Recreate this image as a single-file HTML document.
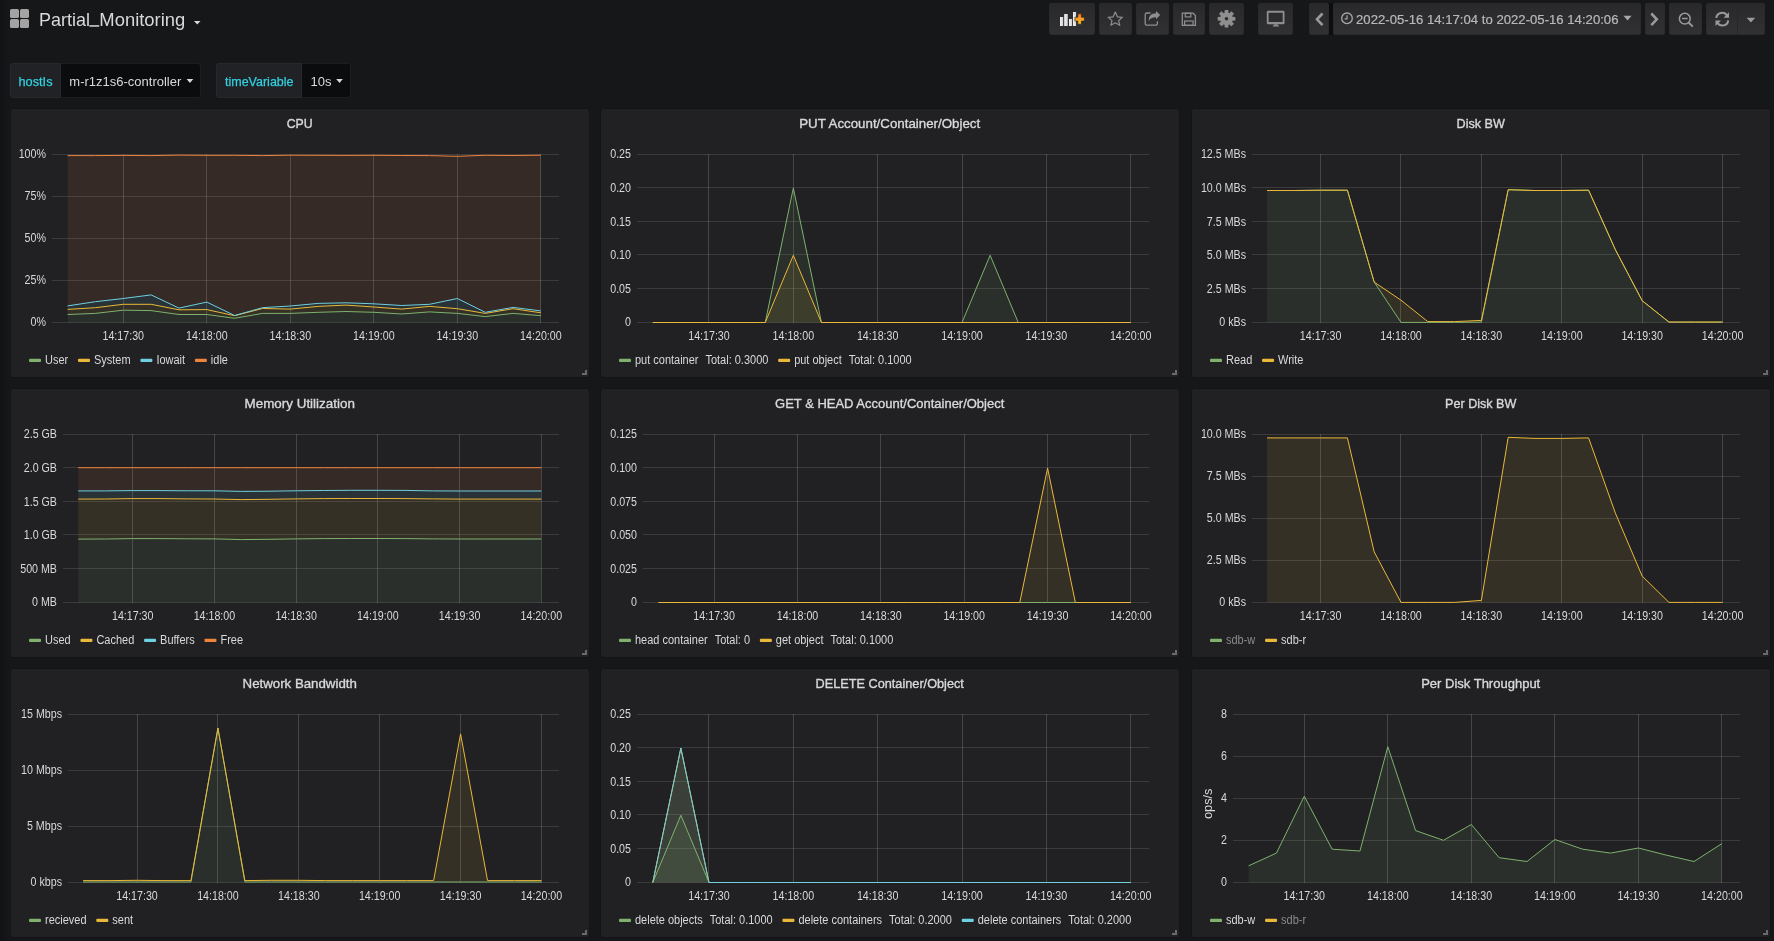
<!DOCTYPE html>
<html><head><meta charset="utf-8">
<style>
html,body{margin:0;padding:0;width:1774px;height:941px;overflow:hidden;background:#161719;}
body{position:relative;font-family:"Liberation Sans",sans-serif;color:#d8d9da;}
.shade{position:absolute;left:0;top:0;width:10px;height:941px;background:linear-gradient(to right,#111214,#161719);}
.panel{position:absolute;width:580px;height:270px;box-sizing:border-box;border:1px solid #131416;background:#212124;border-radius:3px;overflow:hidden;}
.panel svg{position:absolute;left:0;top:0;font-family:"Liberation Sans",sans-serif;}
.btn{position:absolute;top:3px;height:32px;box-sizing:border-box;border:1px solid #2a2a2d;border-radius:2px;background:linear-gradient(to bottom,#29292c,#313134);}
svg.full{position:absolute;left:0;top:0;font-family:"Liberation Sans",sans-serif;}
svg{will-change:transform;}
.vl{position:absolute;top:63px;height:35px;box-sizing:border-box;background:#212226;border:1px solid #27282b;border-radius:3px 0 0 3px;}
.vv{position:absolute;top:63px;height:35px;box-sizing:border-box;background:#0b0c0e;border:1px solid #1c1d20;border-left:none;border-radius:0 3px 3px 0;}
</style></head><body>
<div class="shade"></div>
<!-- buttons -->
<div class="btn" style="left:1049px;width:46px"></div>
<div class="btn" style="left:1099px;width:33px"></div>
<div class="btn" style="left:1136px;width:33px"></div>
<div class="btn" style="left:1173px;width:32px"></div>
<div class="btn" style="left:1209px;width:35px"></div>
<div class="btn" style="left:1258px;width:35px"></div>
<div style="position:absolute;left:1329px;top:3px;width:4px;height:32px;background:#0c0d0f"></div>
<div class="btn" style="left:1309px;width:20px"></div>
<div class="btn" style="left:1333px;width:308px"></div>
<div class="btn" style="left:1645px;width:20px"></div>
<div class="btn" style="left:1669px;width:33px"></div>
<div class="btn" style="left:1706px;width:59px"></div>
<div style="position:absolute;left:1737px;top:4px;width:1px;height:30px;background:#27272a"></div>
<!-- variables -->
<div class="vl" style="left:10px;width:51px"></div>
<div class="vv" style="left:61px;width:140px"></div>
<div class="vl" style="left:216px;width:86px"></div>
<div class="vv" style="left:302px;width:49px"></div>
<svg class="full" width="1774" height="100" viewBox="0 0 1774 100">
 <!-- dashboard grid icon -->
 <g fill="#a3a3a3">
  <rect x="10" y="9" width="9" height="9" rx="1.6"/>
  <rect x="20" y="9" width="9" height="9" rx="1.6"/>
  <rect x="10" y="19" width="9" height="9" rx="1.6"/>
  <rect x="20" y="19" width="9" height="9" rx="1.6"/>
 </g>
 <text x="38.9" y="26.3" font-size="19" fill="#d8d9da" textLength="51" lengthAdjust="spacingAndGlyphs">Partial</text><rect x="89.4" y="25.2" width="9.8" height="1.5" fill="#d8d9da"/><text x="99.3" y="26.3" font-size="19" fill="#d8d9da" textLength="86" lengthAdjust="spacingAndGlyphs">Monitoring</text>
 <path d="M194,21 L200.5,21 L197.25,24.5 Z" fill="#d8d9da"/>
 <!-- add panel icon -->
 <defs>
  <linearGradient id="bar" x1="0" y1="0" x2="1" y2="0"><stop offset="0" stop-color="#f4f4f4"/><stop offset="1" stop-color="#cfcfcf"/></linearGradient>
  <linearGradient id="plus" x1="0" y1="0" x2="0" y2="1"><stop offset="0" stop-color="#f37a2a"/><stop offset="1" stop-color="#fbc21a"/></linearGradient>
 </defs>
 <g fill="url(#bar)">
  <rect x="1060" y="17" width="3.2" height="9"/>
  <rect x="1064.2" y="14" width="3.6" height="12"/>
  <rect x="1069" y="19" width="3.1" height="7"/>
  <rect x="1073" y="12" width="3.1" height="14"/>
 </g>
 <path d="M1077.8,13.8 h3.6 v3.4 h3 v3.9 h-3 v3.1 h-3.6 v-3.1 h-2.9 v-3.9 h2.9 z" fill="url(#plus)" stroke="#212124" stroke-width="0.6"/>
 <!-- star -->
 <path d="M1115.3,12 L1117.4,16.8 L1122.4,17.3 L1118.6,20.6 L1119.8,25.3 L1115.3,22.8 L1110.8,25.3 L1112,20.6 L1108.2,17.3 L1113.2,16.8 Z" fill="none" stroke="#8e8e8e" stroke-width="1.2" stroke-linejoin="round"/>
 <!-- share -->
 <path d="M1150.5,13 h-3.5 a1.8,1.8 0 0 0 -1.8,1.8 v8.6 a1.8,1.8 0 0 0 1.8,1.8 h8.6 a1.8,1.8 0 0 0 1.8,-1.8 v-2.2" fill="none" stroke="#8e8e8e" stroke-width="1.3"/>
 <path d="M1160.2,15 L1156,11 L1156,13.2 C1151,13.2 1148.6,16 1148.8,21.2 C1150,18.3 1152.5,17.2 1156,17.3 L1156,19.3 Z" fill="#8e8e8e"/>
 <!-- save -->
 <path d="M1182.3,13.2 h10.8 l2.3,2.3 v9.8 h-13.1 z" fill="none" stroke="#8e8e8e" stroke-width="1.3"/>
 <rect x="1185.3" y="13.3" width="5.5" height="3.6" fill="none" stroke="#8e8e8e" stroke-width="1.2"/>
 <rect x="1184.6" y="21" width="8.5" height="4.3" fill="none" stroke="#8e8e8e" stroke-width="1.2"/>
 <!-- cog -->
 <path d="M1224.55,12.81 L1224.71,9.98 L1228.29,9.98 L1228.45,12.81 L1229.36,13.19 L1231.47,11.30 L1234.00,13.83 L1232.11,15.94 L1232.49,16.85 L1235.32,17.01 L1235.32,20.59 L1232.49,20.75 L1232.11,21.66 L1234.00,23.77 L1231.47,26.30 L1229.36,24.41 L1228.45,24.79 L1228.29,27.62 L1224.71,27.62 L1224.55,24.79 L1223.64,24.41 L1221.53,26.30 L1219.00,23.77 L1220.89,21.66 L1220.51,20.75 L1217.68,20.59 L1217.68,17.01 L1220.51,16.85 L1220.89,15.94 L1219.00,13.83 L1221.53,11.30 L1223.64,13.19 Z M1228.30,18.8 A1.8,1.8 0 1 0 1224.70,18.8 A1.8,1.8 0 1 0 1228.30,18.8 Z" fill="#8e8e8e" fill-rule="evenodd"/>
 <!-- monitor -->
 <path d="M1268.1,10.8 h15.1 a1.3,1.3 0 0 1 1.3,1.3 v10.8 a1.3,1.3 0 0 1 -1.3,1.3 h-15.1 a1.3,1.3 0 0 1 -1.3,-1.3 v-10.8 a1.3,1.3 0 0 1 1.3,-1.3 z M1268.6,12.7 v9.2 h14.1 v-9.2 z" fill="#8e8e8e" fill-rule="evenodd"/>
 <path d="M1274,24.2 h3.5 l0.6,1.3 h0.9 v0.9 h-6.2 v-0.9 h0.9 z" fill="#8e8e8e"/>
 <!-- chevron left -->
 <path d="M1322.5,13.5 L1317,19.3 L1322.5,25.2" fill="none" stroke="#9a9a9a" stroke-width="2.6"/>
 <!-- clock -->
 <circle cx="1347" cy="18.3" r="5.3" fill="none" stroke="#a8a8a8" stroke-width="1.3"/>
 <path d="M1347,15.3 v3.5 h-2.4" fill="none" stroke="#a8a8a8" stroke-width="1.2"/>
 <text x="1356" y="23.8" font-size="12.5" fill="#b8b8b8" stroke="#b8b8b8" stroke-width="0.2" textLength="262.5" lengthAdjust="spacingAndGlyphs">2022-05-16 14:17:04 to 2022-05-16 14:20:06</text>
 <path d="M1623.5,15.8 L1631.6,15.8 L1627.55,20.6 Z" fill="#a8a8a8"/>
 <!-- chevron right -->
 <path d="M1651.3,13.5 L1656.8,19.3 L1651.3,25.2" fill="none" stroke="#9a9a9a" stroke-width="2.6"/>
 <!-- zoom out -->
 <circle cx="1684.8" cy="18.7" r="5.4" fill="none" stroke="#9a9a9a" stroke-width="1.5"/>
 <path d="M1682,18.5 h5.6" stroke="#9a9a9a" stroke-width="1.5"/>
 <path d="M1688.6,22.5 L1692.8,26.7" stroke="#9a9a9a" stroke-width="1.9"/>
 <!-- refresh -->
 <g fill="none" stroke="#9a9a9a" stroke-width="2">
  <path d="M1716.3,18 A5.8,5.8 0 0 1 1727,15.5"/>
  <path d="M1728.2,20.3 A5.8,5.8 0 0 1 1717.5,22.8"/>
 </g>
 <path d="M1729,12.3 v5.4 h-5.4 z" fill="#9a9a9a"/>
 <path d="M1715.5,26 v-5.4 h5.4 z" fill="#9a9a9a"/>
 <path d="M1746.6,17.8 L1755.2,17.8 L1750.9,22.4 Z" fill="#9a9a9a"/>
 <!-- variables text -->
 <text x="18.5" y="85.7" font-size="13" fill="#32d1df" stroke="#32d1df" stroke-width="0.25" textLength="34" lengthAdjust="spacingAndGlyphs">hostIs</text><text x="69.3" y="85.7" font-size="13" fill="#d8d9da" textLength="112" lengthAdjust="spacingAndGlyphs">m-r1z1s6-controller</text><text x="225" y="85.7" font-size="13" fill="#32d1df" stroke="#32d1df" stroke-width="0.25" textLength="68.5" lengthAdjust="spacingAndGlyphs">timeVariable</text><text x="310.5" y="85.7" font-size="13" fill="#d8d9da" textLength="21" lengthAdjust="spacingAndGlyphs">10s</text>
 <path d="M186.6,79 L193.3,79 L189.95,82.9 Z" fill="#d8d9da"/>
 <path d="M336.2,79 L342.8,79 L339.5,82.9 Z" fill="#d8d9da"/>
</svg>
<div class="panel" style="left:10px;top:108px"><svg width="578" height="268" viewBox="0 0 578 268">
<text x="288.7" y="19.1" font-size="13" fill="#d8d9da" stroke="#d8d9da" stroke-width="0.35" text-anchor="middle" textLength="26.0" lengthAdjust="spacingAndGlyphs">CPU</text>
<line x1="41" y1="45.5" x2="548" y2="45.5" stroke="#c8c8c8" stroke-opacity="0.16" stroke-width="1"/>
<text x="35.00" y="49.40" font-size="12" fill="#d8d9da" text-anchor="end" textLength="27.32" lengthAdjust="spacingAndGlyphs">100%</text>
<line x1="41" y1="87.5" x2="548" y2="87.5" stroke="#c8c8c8" stroke-opacity="0.16" stroke-width="1"/>
<text x="35.00" y="91.40" font-size="12" fill="#d8d9da" text-anchor="end" textLength="21.38" lengthAdjust="spacingAndGlyphs">75%</text>
<line x1="41" y1="129.5" x2="548" y2="129.5" stroke="#c8c8c8" stroke-opacity="0.16" stroke-width="1"/>
<text x="35.00" y="133.40" font-size="12" fill="#d8d9da" text-anchor="end" textLength="21.38" lengthAdjust="spacingAndGlyphs">50%</text>
<line x1="41" y1="171.5" x2="548" y2="171.5" stroke="#c8c8c8" stroke-opacity="0.16" stroke-width="1"/>
<text x="35.00" y="175.40" font-size="12" fill="#d8d9da" text-anchor="end" textLength="21.38" lengthAdjust="spacingAndGlyphs">25%</text>
<line x1="41" y1="213.5" x2="548" y2="213.5" stroke="#c8c8c8" stroke-opacity="0.16" stroke-width="1"/>
<text x="35.00" y="217.40" font-size="12" fill="#d8d9da" text-anchor="end" textLength="15.44" lengthAdjust="spacingAndGlyphs">0%</text>
<line x1="112.5" y1="45.0" x2="112.5" y2="214.0" stroke="#c8c8c8" stroke-opacity="0.22" stroke-width="1"/>
<text x="112.28" y="230.50" font-size="12" fill="#d8d9da" text-anchor="middle" textLength="41.57" lengthAdjust="spacingAndGlyphs">14:17:30</text>
<line x1="195.5" y1="45.0" x2="195.5" y2="214.0" stroke="#c8c8c8" stroke-opacity="0.22" stroke-width="1"/>
<text x="195.80" y="230.50" font-size="12" fill="#d8d9da" text-anchor="middle" textLength="41.57" lengthAdjust="spacingAndGlyphs">14:18:00</text>
<line x1="279.5" y1="45.0" x2="279.5" y2="214.0" stroke="#c8c8c8" stroke-opacity="0.22" stroke-width="1"/>
<text x="279.33" y="230.50" font-size="12" fill="#d8d9da" text-anchor="middle" textLength="41.57" lengthAdjust="spacingAndGlyphs">14:18:30</text>
<line x1="362.5" y1="45.0" x2="362.5" y2="214.0" stroke="#c8c8c8" stroke-opacity="0.22" stroke-width="1"/>
<text x="362.85" y="230.50" font-size="12" fill="#d8d9da" text-anchor="middle" textLength="41.57" lengthAdjust="spacingAndGlyphs">14:19:00</text>
<line x1="446.5" y1="45.0" x2="446.5" y2="214.0" stroke="#c8c8c8" stroke-opacity="0.22" stroke-width="1"/>
<text x="446.38" y="230.50" font-size="12" fill="#d8d9da" text-anchor="middle" textLength="41.57" lengthAdjust="spacingAndGlyphs">14:19:30</text>
<line x1="529.5" y1="45.0" x2="529.5" y2="214.0" stroke="#c8c8c8" stroke-opacity="0.22" stroke-width="1"/>
<text x="529.90" y="230.50" font-size="12" fill="#d8d9da" text-anchor="middle" textLength="41.57" lengthAdjust="spacingAndGlyphs">14:20:00</text>
<polygon points="56.59,205.50 84.43,204.40 112.28,201.20 140.12,201.60 167.96,205.50 195.80,205.50 223.64,209.30 251.48,204.40 279.33,204.40 307.17,203.30 335.01,202.50 362.85,203.30 390.69,205.00 418.54,202.90 446.38,204.40 474.22,207.60 502.06,204.40 529.90,206.70 529.90,213.50 502.06,213.50 474.22,213.50 446.38,213.50 418.54,213.50 390.69,213.50 362.85,213.50 335.01,213.50 307.17,213.50 279.33,213.50 251.48,213.50 223.64,213.50 195.80,213.50 167.96,213.50 140.12,213.50 112.28,213.50 84.43,213.50 56.59,213.50" fill="#7EB26D" fill-opacity="0.1"/>
<polygon points="56.59,200.40 84.43,198.70 112.28,195.30 140.12,195.30 167.96,200.80 195.80,200.60 223.64,206.70 251.48,199.50 279.33,200.10 307.17,197.40 335.01,196.10 362.85,198.00 390.69,200.10 418.54,197.40 446.38,199.70 474.22,204.40 502.06,199.70 529.90,203.80 529.90,206.70 502.06,204.40 474.22,207.60 446.38,204.40 418.54,202.90 390.69,205.00 362.85,203.30 335.01,202.50 307.17,203.30 279.33,204.40 251.48,204.40 223.64,209.30 195.80,205.50 167.96,205.50 140.12,201.60 112.28,201.20 84.43,204.40 56.59,205.50" fill="#EAB839" fill-opacity="0.1"/>
<polygon points="56.59,196.90 84.43,192.70 112.28,189.50 140.12,185.90 167.96,199.10 195.80,193.10 223.64,206.50 251.48,198.70 279.33,197.00 307.17,194.40 335.01,193.80 362.85,194.80 390.69,196.50 418.54,195.30 446.38,189.50 474.22,203.30 502.06,198.40 529.90,201.90 529.90,203.80 502.06,199.70 474.22,204.40 446.38,199.70 418.54,197.40 390.69,200.10 362.85,198.00 335.01,196.10 307.17,197.40 279.33,200.10 251.48,199.50 223.64,206.70 195.80,200.60 167.96,200.80 140.12,195.30 112.28,195.30 84.43,198.70 56.59,200.40" fill="#6ED0E0" fill-opacity="0.1"/>
<polygon points="56.59,46.60 84.43,46.60 112.28,46.40 140.12,46.60 167.96,46.10 195.80,46.30 223.64,46.30 251.48,46.60 279.33,46.20 307.17,46.30 335.01,46.40 362.85,46.30 390.69,46.50 418.54,46.60 446.38,47.30 474.22,46.30 502.06,46.50 529.90,46.20 529.90,201.90 502.06,198.40 474.22,203.30 446.38,189.50 418.54,195.30 390.69,196.50 362.85,194.80 335.01,193.80 307.17,194.40 279.33,197.00 251.48,198.70 223.64,206.50 195.80,193.10 167.96,199.10 140.12,185.90 112.28,189.50 84.43,192.70 56.59,196.90" fill="#EF843C" fill-opacity="0.1"/>
<polyline points="56.59,205.50 84.43,204.40 112.28,201.20 140.12,201.60 167.96,205.50 195.80,205.50 223.64,209.30 251.48,204.40 279.33,204.40 307.17,203.30 335.01,202.50 362.85,203.30 390.69,205.00 418.54,202.90 446.38,204.40 474.22,207.60 502.06,204.40 529.90,206.70" fill="none" stroke="#7EB26D" stroke-width="1" stroke-linejoin="round"/>
<polyline points="56.59,200.40 84.43,198.70 112.28,195.30 140.12,195.30 167.96,200.80 195.80,200.60 223.64,206.70 251.48,199.50 279.33,200.10 307.17,197.40 335.01,196.10 362.85,198.00 390.69,200.10 418.54,197.40 446.38,199.70 474.22,204.40 502.06,199.70 529.90,203.80" fill="none" stroke="#EAB839" stroke-width="1" stroke-linejoin="round"/>
<polyline points="56.59,196.90 84.43,192.70 112.28,189.50 140.12,185.90 167.96,199.10 195.80,193.10 223.64,206.50 251.48,198.70 279.33,197.00 307.17,194.40 335.01,193.80 362.85,194.80 390.69,196.50 418.54,195.30 446.38,189.50 474.22,203.30 502.06,198.40 529.90,201.90" fill="none" stroke="#6ED0E0" stroke-width="1" stroke-linejoin="round"/>
<polyline points="56.59,46.60 84.43,46.60 112.28,46.40 140.12,46.60 167.96,46.10 195.80,46.30 223.64,46.30 251.48,46.60 279.33,46.20 307.17,46.30 335.01,46.40 362.85,46.30 390.69,46.50 418.54,46.60 446.38,47.30 474.22,46.30 502.06,46.50 529.90,46.20" fill="none" stroke="#EF843C" stroke-width="1" stroke-linejoin="round"/>
<rect x="18" y="249.8" width="12" height="3.2" rx="1" fill="#7EB26D"/>
<text x="34.00" y="255.30" font-size="12" fill="#d8d9da" text-anchor="start" textLength="23.18" lengthAdjust="spacingAndGlyphs">User</text>
<rect x="66.983240625" y="249.8" width="12" height="3.2" rx="1" fill="#EAB839"/>
<text x="82.98" y="255.30" font-size="12" fill="#d8d9da" text-anchor="start" textLength="36.61" lengthAdjust="spacingAndGlyphs">System</text>
<rect x="129.391246875" y="249.8" width="12" height="3.2" rx="1" fill="#6ED0E0"/>
<text x="145.39" y="255.30" font-size="12" fill="#d8d9da" text-anchor="start" textLength="28.68" lengthAdjust="spacingAndGlyphs">Iowait</text>
<rect x="183.87478125" y="249.8" width="12" height="3.2" rx="1" fill="#EF843C"/>
<text x="199.87" y="255.30" font-size="12" fill="#d8d9da" text-anchor="start" textLength="17.09" lengthAdjust="spacingAndGlyphs">idle</text>
<path d="M574,261 h2 v5 h-5 v-2 h3 z" fill="#6a6a6c"/>
</svg></div>
<div class="panel" style="left:600px;top:108px"><svg width="578" height="268" viewBox="0 0 578 268">
<text x="288.7" y="19.1" font-size="13" fill="#d8d9da" stroke="#d8d9da" stroke-width="0.35" text-anchor="middle" textLength="181.0" lengthAdjust="spacingAndGlyphs">PUT Account/Container/Object</text>
<line x1="36" y1="45.5" x2="548" y2="45.5" stroke="#c8c8c8" stroke-opacity="0.16" stroke-width="1"/>
<text x="30.00" y="49.40" font-size="12" fill="#d8d9da" text-anchor="end" textLength="20.79" lengthAdjust="spacingAndGlyphs">0.25</text>
<line x1="36" y1="78.5" x2="548" y2="78.5" stroke="#c8c8c8" stroke-opacity="0.16" stroke-width="1"/>
<text x="30.00" y="83.00" font-size="12" fill="#d8d9da" text-anchor="end" textLength="20.79" lengthAdjust="spacingAndGlyphs">0.20</text>
<line x1="36" y1="112.5" x2="548" y2="112.5" stroke="#c8c8c8" stroke-opacity="0.16" stroke-width="1"/>
<text x="30.00" y="116.60" font-size="12" fill="#d8d9da" text-anchor="end" textLength="20.79" lengthAdjust="spacingAndGlyphs">0.15</text>
<line x1="36" y1="145.5" x2="548" y2="145.5" stroke="#c8c8c8" stroke-opacity="0.16" stroke-width="1"/>
<text x="30.00" y="150.20" font-size="12" fill="#d8d9da" text-anchor="end" textLength="20.79" lengthAdjust="spacingAndGlyphs">0.10</text>
<line x1="36" y1="179.5" x2="548" y2="179.5" stroke="#c8c8c8" stroke-opacity="0.16" stroke-width="1"/>
<text x="30.00" y="183.80" font-size="12" fill="#d8d9da" text-anchor="end" textLength="20.79" lengthAdjust="spacingAndGlyphs">0.05</text>
<line x1="36" y1="213.5" x2="548" y2="213.5" stroke="#c8c8c8" stroke-opacity="0.16" stroke-width="1"/>
<text x="30.00" y="217.40" font-size="12" fill="#d8d9da" text-anchor="end" textLength="5.94" lengthAdjust="spacingAndGlyphs">0</text>
<line x1="107.5" y1="45.0" x2="107.5" y2="214.0" stroke="#c8c8c8" stroke-opacity="0.22" stroke-width="1"/>
<text x="107.98" y="230.50" font-size="12" fill="#d8d9da" text-anchor="middle" textLength="41.57" lengthAdjust="spacingAndGlyphs">14:17:30</text>
<line x1="192.5" y1="45.0" x2="192.5" y2="214.0" stroke="#c8c8c8" stroke-opacity="0.22" stroke-width="1"/>
<text x="192.33" y="230.50" font-size="12" fill="#d8d9da" text-anchor="middle" textLength="41.57" lengthAdjust="spacingAndGlyphs">14:18:00</text>
<line x1="276.5" y1="45.0" x2="276.5" y2="214.0" stroke="#c8c8c8" stroke-opacity="0.22" stroke-width="1"/>
<text x="276.68" y="230.50" font-size="12" fill="#d8d9da" text-anchor="middle" textLength="41.57" lengthAdjust="spacingAndGlyphs">14:18:30</text>
<line x1="361.5" y1="45.0" x2="361.5" y2="214.0" stroke="#c8c8c8" stroke-opacity="0.22" stroke-width="1"/>
<text x="361.03" y="230.50" font-size="12" fill="#d8d9da" text-anchor="middle" textLength="41.57" lengthAdjust="spacingAndGlyphs">14:19:00</text>
<line x1="445.5" y1="45.0" x2="445.5" y2="214.0" stroke="#c8c8c8" stroke-opacity="0.22" stroke-width="1"/>
<text x="445.38" y="230.50" font-size="12" fill="#d8d9da" text-anchor="middle" textLength="41.57" lengthAdjust="spacingAndGlyphs">14:19:30</text>
<line x1="529.5" y1="45.0" x2="529.5" y2="214.0" stroke="#c8c8c8" stroke-opacity="0.22" stroke-width="1"/>
<text x="529.72" y="230.50" font-size="12" fill="#d8d9da" text-anchor="middle" textLength="41.57" lengthAdjust="spacingAndGlyphs">14:20:00</text>
<polygon points="51.75,213.50 79.86,213.50 107.98,213.50 136.09,213.50 164.21,213.50 192.33,79.10 220.44,213.50 248.56,213.50 276.68,213.50 304.79,213.50 332.91,213.50 361.03,213.50 389.14,146.30 417.26,213.50 445.38,213.50 473.49,213.50 501.61,213.50 529.72,213.50 529.72,213.50 501.61,213.50 473.49,213.50 445.38,213.50 417.26,213.50 389.14,213.50 361.03,213.50 332.91,213.50 304.79,213.50 276.68,213.50 248.56,213.50 220.44,213.50 192.33,213.50 164.21,213.50 136.09,213.50 107.98,213.50 79.86,213.50 51.75,213.50" fill="#7EB26D" fill-opacity="0.1"/>
<polygon points="51.75,213.50 79.86,213.50 107.98,213.50 136.09,213.50 164.21,213.50 192.33,146.30 220.44,213.50 248.56,213.50 276.68,213.50 304.79,213.50 332.91,213.50 361.03,213.50 389.14,213.50 417.26,213.50 445.38,213.50 473.49,213.50 501.61,213.50 529.72,213.50 529.72,213.50 501.61,213.50 473.49,213.50 445.38,213.50 417.26,213.50 389.14,213.50 361.03,213.50 332.91,213.50 304.79,213.50 276.68,213.50 248.56,213.50 220.44,213.50 192.33,213.50 164.21,213.50 136.09,213.50 107.98,213.50 79.86,213.50 51.75,213.50" fill="#EAB839" fill-opacity="0.1"/>
<polyline points="51.75,213.50 79.86,213.50 107.98,213.50 136.09,213.50 164.21,213.50 192.33,79.10 220.44,213.50 248.56,213.50 276.68,213.50 304.79,213.50 332.91,213.50 361.03,213.50 389.14,146.30 417.26,213.50 445.38,213.50 473.49,213.50 501.61,213.50 529.72,213.50" fill="none" stroke="#7EB26D" stroke-width="1" stroke-linejoin="round"/>
<polyline points="51.75,213.50 79.86,213.50 107.98,213.50 136.09,213.50 164.21,213.50 192.33,146.30 220.44,213.50 248.56,213.50 276.68,213.50 304.79,213.50 332.91,213.50 361.03,213.50 389.14,213.50 417.26,213.50 445.38,213.50 473.49,213.50 501.61,213.50 529.72,213.50" fill="none" stroke="#EAB839" stroke-width="1" stroke-linejoin="round"/>
<rect x="18" y="249.8" width="12" height="3.2" rx="1" fill="#7EB26D"/>
<text x="34.00" y="255.30" font-size="12" fill="#d8d9da" text-anchor="start" textLength="63.48" lengthAdjust="spacingAndGlyphs">put container</text>
<text x="104.48" y="255.30" font-size="12" fill="#d8d9da" text-anchor="start" textLength="62.88" lengthAdjust="spacingAndGlyphs">Total: 0.3000</text>
<rect x="177.16350156250002" y="249.8" width="12" height="3.2" rx="1" fill="#EAB839"/>
<text x="193.16" y="255.30" font-size="12" fill="#d8d9da" text-anchor="start" textLength="47.61" lengthAdjust="spacingAndGlyphs">put object</text>
<text x="247.78" y="255.30" font-size="12" fill="#d8d9da" text-anchor="start" textLength="62.88" lengthAdjust="spacingAndGlyphs">Total: 0.1000</text>
<path d="M574,261 h2 v5 h-5 v-2 h3 z" fill="#6a6a6c"/>
</svg></div>
<div class="panel" style="left:1191px;top:108px"><svg width="578" height="268" viewBox="0 0 578 268">
<text x="288.7" y="19.1" font-size="13" fill="#d8d9da" stroke="#d8d9da" stroke-width="0.35" text-anchor="middle" textLength="48.3" lengthAdjust="spacingAndGlyphs">Disk BW</text>
<line x1="60" y1="45.5" x2="548" y2="45.5" stroke="#c8c8c8" stroke-opacity="0.16" stroke-width="1"/>
<text x="54.00" y="49.40" font-size="12" fill="#d8d9da" text-anchor="end" textLength="45.11" lengthAdjust="spacingAndGlyphs">12.5 MBs</text>
<line x1="60" y1="78.5" x2="548" y2="78.5" stroke="#c8c8c8" stroke-opacity="0.16" stroke-width="1"/>
<text x="54.00" y="83.00" font-size="12" fill="#d8d9da" text-anchor="end" textLength="45.11" lengthAdjust="spacingAndGlyphs">10.0 MBs</text>
<line x1="60" y1="112.5" x2="548" y2="112.5" stroke="#c8c8c8" stroke-opacity="0.16" stroke-width="1"/>
<text x="54.00" y="116.60" font-size="12" fill="#d8d9da" text-anchor="end" textLength="39.17" lengthAdjust="spacingAndGlyphs">7.5 MBs</text>
<line x1="60" y1="145.5" x2="548" y2="145.5" stroke="#c8c8c8" stroke-opacity="0.16" stroke-width="1"/>
<text x="54.00" y="150.20" font-size="12" fill="#d8d9da" text-anchor="end" textLength="39.17" lengthAdjust="spacingAndGlyphs">5.0 MBs</text>
<line x1="60" y1="179.5" x2="548" y2="179.5" stroke="#c8c8c8" stroke-opacity="0.16" stroke-width="1"/>
<text x="54.00" y="183.80" font-size="12" fill="#d8d9da" text-anchor="end" textLength="39.17" lengthAdjust="spacingAndGlyphs">2.5 MBs</text>
<line x1="60" y1="213.5" x2="548" y2="213.5" stroke="#c8c8c8" stroke-opacity="0.16" stroke-width="1"/>
<text x="54.00" y="217.40" font-size="12" fill="#d8d9da" text-anchor="end" textLength="26.71" lengthAdjust="spacingAndGlyphs">0 kBs</text>
<line x1="128.5" y1="45.0" x2="128.5" y2="214.0" stroke="#c8c8c8" stroke-opacity="0.22" stroke-width="1"/>
<text x="128.60" y="230.50" font-size="12" fill="#d8d9da" text-anchor="middle" textLength="41.57" lengthAdjust="spacingAndGlyphs">14:17:30</text>
<line x1="208.5" y1="45.0" x2="208.5" y2="214.0" stroke="#c8c8c8" stroke-opacity="0.22" stroke-width="1"/>
<text x="209.00" y="230.50" font-size="12" fill="#d8d9da" text-anchor="middle" textLength="41.57" lengthAdjust="spacingAndGlyphs">14:18:00</text>
<line x1="289.5" y1="45.0" x2="289.5" y2="214.0" stroke="#c8c8c8" stroke-opacity="0.22" stroke-width="1"/>
<text x="289.39" y="230.50" font-size="12" fill="#d8d9da" text-anchor="middle" textLength="41.57" lengthAdjust="spacingAndGlyphs">14:18:30</text>
<line x1="369.5" y1="45.0" x2="369.5" y2="214.0" stroke="#c8c8c8" stroke-opacity="0.22" stroke-width="1"/>
<text x="369.79" y="230.50" font-size="12" fill="#d8d9da" text-anchor="middle" textLength="41.57" lengthAdjust="spacingAndGlyphs">14:19:00</text>
<line x1="450.5" y1="45.0" x2="450.5" y2="214.0" stroke="#c8c8c8" stroke-opacity="0.22" stroke-width="1"/>
<text x="450.19" y="230.50" font-size="12" fill="#d8d9da" text-anchor="middle" textLength="41.57" lengthAdjust="spacingAndGlyphs">14:19:30</text>
<line x1="530.5" y1="45.0" x2="530.5" y2="214.0" stroke="#c8c8c8" stroke-opacity="0.22" stroke-width="1"/>
<text x="530.58" y="230.50" font-size="12" fill="#d8d9da" text-anchor="middle" textLength="41.57" lengthAdjust="spacingAndGlyphs">14:20:00</text>
<polygon points="75.01,81.50 101.81,81.50 128.60,81.20 155.40,81.20 182.20,173.10 209.00,213.40 235.80,213.40 262.60,213.40 289.39,213.20 316.19,80.70 342.99,81.50 369.79,81.50 396.59,81.20 423.39,140.70 450.19,191.70 476.98,213.20 503.78,213.20 530.58,213.20 530.58,213.50 503.78,213.50 476.98,213.50 450.19,213.50 423.39,213.50 396.59,213.50 369.79,213.50 342.99,213.50 316.19,213.50 289.39,213.50 262.60,213.50 235.80,213.50 209.00,213.50 182.20,213.50 155.40,213.50 128.60,213.50 101.81,213.50 75.01,213.50" fill="#7EB26D" fill-opacity="0.1"/>
<polygon points="75.01,81.50 101.81,81.50 128.60,81.20 155.40,81.20 182.20,173.10 209.00,191.20 235.80,212.60 262.60,212.60 289.39,211.40 316.19,80.70 342.99,81.50 369.79,81.50 396.59,81.20 423.39,140.70 450.19,191.70 476.98,213.00 503.78,213.00 530.58,213.00 530.58,213.20 503.78,213.20 476.98,213.20 450.19,191.70 423.39,140.70 396.59,81.20 369.79,81.50 342.99,81.50 316.19,80.70 289.39,213.20 262.60,213.40 235.80,213.40 209.00,213.40 182.20,173.10 155.40,81.20 128.60,81.20 101.81,81.50 75.01,81.50" fill="#EAB839" fill-opacity="0.1"/>
<polyline points="75.01,81.50 101.81,81.50 128.60,81.20 155.40,81.20 182.20,173.10 209.00,213.40 235.80,213.40 262.60,213.40 289.39,213.20 316.19,80.70 342.99,81.50 369.79,81.50 396.59,81.20 423.39,140.70 450.19,191.70 476.98,213.20 503.78,213.20 530.58,213.20" fill="none" stroke="#7EB26D" stroke-width="1" stroke-linejoin="round"/>
<polyline points="75.01,81.50 101.81,81.50 128.60,81.20 155.40,81.20 182.20,173.10 209.00,191.20 235.80,212.60 262.60,212.60 289.39,211.40 316.19,80.70 342.99,81.50 369.79,81.50 396.59,81.20 423.39,140.70 450.19,191.70 476.98,213.00 503.78,213.00 530.58,213.00" fill="none" stroke="#EAB839" stroke-width="1" stroke-linejoin="round"/>
<rect x="18" y="249.8" width="12" height="3.2" rx="1" fill="#7EB26D"/>
<text x="34.00" y="255.30" font-size="12" fill="#d8d9da" text-anchor="start" textLength="26.25" lengthAdjust="spacingAndGlyphs">Read</text>
<rect x="70.04992031249999" y="249.8" width="12" height="3.2" rx="1" fill="#EAB839"/>
<text x="86.05" y="255.30" font-size="12" fill="#d8d9da" text-anchor="start" textLength="25.42" lengthAdjust="spacingAndGlyphs">Write</text>
<path d="M574,261 h2 v5 h-5 v-2 h3 z" fill="#6a6a6c"/>
</svg></div>
<div class="panel" style="left:10px;top:388px"><svg width="578" height="268" viewBox="0 0 578 268">
<text x="288.7" y="19.1" font-size="13" fill="#d8d9da" stroke="#d8d9da" stroke-width="0.35" text-anchor="middle" textLength="110.3" lengthAdjust="spacingAndGlyphs">Memory Utilization</text>
<line x1="52" y1="45.5" x2="548" y2="45.5" stroke="#c8c8c8" stroke-opacity="0.16" stroke-width="1"/>
<text x="46.00" y="49.40" font-size="12" fill="#d8d9da" text-anchor="end" textLength="33.24" lengthAdjust="spacingAndGlyphs">2.5 GB</text>
<line x1="52" y1="78.5" x2="548" y2="78.5" stroke="#c8c8c8" stroke-opacity="0.16" stroke-width="1"/>
<text x="46.00" y="83.00" font-size="12" fill="#d8d9da" text-anchor="end" textLength="33.24" lengthAdjust="spacingAndGlyphs">2.0 GB</text>
<line x1="52" y1="112.5" x2="548" y2="112.5" stroke="#c8c8c8" stroke-opacity="0.16" stroke-width="1"/>
<text x="46.00" y="116.60" font-size="12" fill="#d8d9da" text-anchor="end" textLength="33.24" lengthAdjust="spacingAndGlyphs">1.5 GB</text>
<line x1="52" y1="145.5" x2="548" y2="145.5" stroke="#c8c8c8" stroke-opacity="0.16" stroke-width="1"/>
<text x="46.00" y="150.20" font-size="12" fill="#d8d9da" text-anchor="end" textLength="33.24" lengthAdjust="spacingAndGlyphs">1.0 GB</text>
<line x1="52" y1="179.5" x2="548" y2="179.5" stroke="#c8c8c8" stroke-opacity="0.16" stroke-width="1"/>
<text x="46.00" y="183.80" font-size="12" fill="#d8d9da" text-anchor="end" textLength="36.81" lengthAdjust="spacingAndGlyphs">500 MB</text>
<line x1="52" y1="213.5" x2="548" y2="213.5" stroke="#c8c8c8" stroke-opacity="0.16" stroke-width="1"/>
<text x="46.00" y="217.40" font-size="12" fill="#d8d9da" text-anchor="end" textLength="24.93" lengthAdjust="spacingAndGlyphs">0 MB</text>
<line x1="121.5" y1="45.0" x2="121.5" y2="214.0" stroke="#c8c8c8" stroke-opacity="0.22" stroke-width="1"/>
<text x="121.73" y="230.50" font-size="12" fill="#d8d9da" text-anchor="middle" textLength="41.57" lengthAdjust="spacingAndGlyphs">14:17:30</text>
<line x1="203.5" y1="45.0" x2="203.5" y2="214.0" stroke="#c8c8c8" stroke-opacity="0.22" stroke-width="1"/>
<text x="203.44" y="230.50" font-size="12" fill="#d8d9da" text-anchor="middle" textLength="41.57" lengthAdjust="spacingAndGlyphs">14:18:00</text>
<line x1="285.5" y1="45.0" x2="285.5" y2="214.0" stroke="#c8c8c8" stroke-opacity="0.22" stroke-width="1"/>
<text x="285.16" y="230.50" font-size="12" fill="#d8d9da" text-anchor="middle" textLength="41.57" lengthAdjust="spacingAndGlyphs">14:18:30</text>
<line x1="366.5" y1="45.0" x2="366.5" y2="214.0" stroke="#c8c8c8" stroke-opacity="0.22" stroke-width="1"/>
<text x="366.87" y="230.50" font-size="12" fill="#d8d9da" text-anchor="middle" textLength="41.57" lengthAdjust="spacingAndGlyphs">14:19:00</text>
<line x1="448.5" y1="45.0" x2="448.5" y2="214.0" stroke="#c8c8c8" stroke-opacity="0.22" stroke-width="1"/>
<text x="448.58" y="230.50" font-size="12" fill="#d8d9da" text-anchor="middle" textLength="41.57" lengthAdjust="spacingAndGlyphs">14:19:30</text>
<line x1="530.5" y1="45.0" x2="530.5" y2="214.0" stroke="#c8c8c8" stroke-opacity="0.22" stroke-width="1"/>
<text x="530.30" y="230.50" font-size="12" fill="#d8d9da" text-anchor="middle" textLength="41.57" lengthAdjust="spacingAndGlyphs">14:20:00</text>
<polygon points="67.25,150.10 94.49,150.00 121.73,149.60 148.97,149.60 176.20,149.80 203.44,149.90 230.68,150.60 257.92,150.30 285.16,149.90 312.39,149.60 339.63,149.50 366.87,149.50 394.11,149.60 421.34,149.90 448.58,150.00 475.82,150.00 503.06,150.00 530.30,150.00 530.30,213.50 503.06,213.50 475.82,213.50 448.58,213.50 421.34,213.50 394.11,213.50 366.87,213.50 339.63,213.50 312.39,213.50 285.16,213.50 257.92,213.50 230.68,213.50 203.44,213.50 176.20,213.50 148.97,213.50 121.73,213.50 94.49,213.50 67.25,213.50" fill="#7EB26D" fill-opacity="0.1"/>
<polygon points="67.25,110.10 94.49,110.00 121.73,109.60 148.97,109.60 176.20,109.90 203.44,110.00 230.68,110.60 257.92,110.30 285.16,109.90 312.39,109.60 339.63,109.50 366.87,109.50 394.11,109.60 421.34,109.90 448.58,110.10 475.82,110.10 503.06,110.10 530.30,110.10 530.30,150.00 503.06,150.00 475.82,150.00 448.58,150.00 421.34,149.90 394.11,149.60 366.87,149.50 339.63,149.50 312.39,149.60 285.16,149.90 257.92,150.30 230.68,150.60 203.44,149.90 176.20,149.80 148.97,149.60 121.73,149.60 94.49,150.00 67.25,150.10" fill="#EAB839" fill-opacity="0.1"/>
<polygon points="67.25,101.90 94.49,101.90 121.73,101.60 148.97,101.60 176.20,101.80 203.44,101.80 230.68,102.40 257.92,102.20 285.16,101.80 312.39,101.50 339.63,101.30 366.87,101.30 394.11,101.40 421.34,101.90 448.58,102.00 475.82,102.00 503.06,102.00 530.30,102.00 530.30,110.10 503.06,110.10 475.82,110.10 448.58,110.10 421.34,109.90 394.11,109.60 366.87,109.50 339.63,109.50 312.39,109.60 285.16,109.90 257.92,110.30 230.68,110.60 203.44,110.00 176.20,109.90 148.97,109.60 121.73,109.60 94.49,110.00 67.25,110.10" fill="#6ED0E0" fill-opacity="0.1"/>
<polygon points="67.25,78.70 94.49,78.70 121.73,78.70 148.97,78.70 176.20,78.70 203.44,78.70 230.68,78.70 257.92,78.70 285.16,78.70 312.39,78.70 339.63,78.70 366.87,78.70 394.11,78.70 421.34,78.70 448.58,78.70 475.82,78.70 503.06,78.70 530.30,78.70 530.30,102.00 503.06,102.00 475.82,102.00 448.58,102.00 421.34,101.90 394.11,101.40 366.87,101.30 339.63,101.30 312.39,101.50 285.16,101.80 257.92,102.20 230.68,102.40 203.44,101.80 176.20,101.80 148.97,101.60 121.73,101.60 94.49,101.90 67.25,101.90" fill="#EF843C" fill-opacity="0.1"/>
<polyline points="67.25,150.10 94.49,150.00 121.73,149.60 148.97,149.60 176.20,149.80 203.44,149.90 230.68,150.60 257.92,150.30 285.16,149.90 312.39,149.60 339.63,149.50 366.87,149.50 394.11,149.60 421.34,149.90 448.58,150.00 475.82,150.00 503.06,150.00 530.30,150.00" fill="none" stroke="#7EB26D" stroke-width="1" stroke-linejoin="round"/>
<polyline points="67.25,110.10 94.49,110.00 121.73,109.60 148.97,109.60 176.20,109.90 203.44,110.00 230.68,110.60 257.92,110.30 285.16,109.90 312.39,109.60 339.63,109.50 366.87,109.50 394.11,109.60 421.34,109.90 448.58,110.10 475.82,110.10 503.06,110.10 530.30,110.10" fill="none" stroke="#EAB839" stroke-width="1" stroke-linejoin="round"/>
<polyline points="67.25,101.90 94.49,101.90 121.73,101.60 148.97,101.60 176.20,101.80 203.44,101.80 230.68,102.40 257.92,102.20 285.16,101.80 312.39,101.50 339.63,101.30 366.87,101.30 394.11,101.40 421.34,101.90 448.58,102.00 475.82,102.00 503.06,102.00 530.30,102.00" fill="none" stroke="#6ED0E0" stroke-width="1" stroke-linejoin="round"/>
<polyline points="67.25,78.70 94.49,78.70 121.73,78.70 148.97,78.70 176.20,78.70 203.44,78.70 230.68,78.70 257.92,78.70 285.16,78.70 312.39,78.70 339.63,78.70 366.87,78.70 394.11,78.70 421.34,78.70 448.58,78.70 475.82,78.70 503.06,78.70 530.30,78.70" fill="none" stroke="#EF843C" stroke-width="1" stroke-linejoin="round"/>
<rect x="18" y="249.8" width="12" height="3.2" rx="1" fill="#7EB26D"/>
<text x="34.00" y="255.30" font-size="12" fill="#d8d9da" text-anchor="start" textLength="25.63" lengthAdjust="spacingAndGlyphs">Used</text>
<rect x="69.433153125" y="249.8" width="12" height="3.2" rx="1" fill="#EAB839"/>
<text x="85.43" y="255.30" font-size="12" fill="#d8d9da" text-anchor="start" textLength="37.85" lengthAdjust="spacingAndGlyphs">Cached</text>
<rect x="133.079840625" y="249.8" width="12" height="3.2" rx="1" fill="#6ED0E0"/>
<text x="149.08" y="255.30" font-size="12" fill="#d8d9da" text-anchor="start" textLength="34.59" lengthAdjust="spacingAndGlyphs">Buffers</text>
<rect x="193.466840625" y="249.8" width="12" height="3.2" rx="1" fill="#EF843C"/>
<text x="209.47" y="255.30" font-size="12" fill="#d8d9da" text-anchor="start" textLength="22.58" lengthAdjust="spacingAndGlyphs">Free</text>
<path d="M574,261 h2 v5 h-5 v-2 h3 z" fill="#6a6a6c"/>
</svg></div>
<div class="panel" style="left:600px;top:388px"><svg width="578" height="268" viewBox="0 0 578 268">
<text x="288.7" y="19.1" font-size="13" fill="#d8d9da" stroke="#d8d9da" stroke-width="0.35" text-anchor="middle" textLength="229.2" lengthAdjust="spacingAndGlyphs">GET &amp; HEAD Account/Container/Object</text>
<line x1="42" y1="45.5" x2="548" y2="45.5" stroke="#c8c8c8" stroke-opacity="0.16" stroke-width="1"/>
<text x="36.00" y="49.40" font-size="12" fill="#d8d9da" text-anchor="end" textLength="26.73" lengthAdjust="spacingAndGlyphs">0.125</text>
<line x1="42" y1="78.5" x2="548" y2="78.5" stroke="#c8c8c8" stroke-opacity="0.16" stroke-width="1"/>
<text x="36.00" y="83.00" font-size="12" fill="#d8d9da" text-anchor="end" textLength="26.73" lengthAdjust="spacingAndGlyphs">0.100</text>
<line x1="42" y1="112.5" x2="548" y2="112.5" stroke="#c8c8c8" stroke-opacity="0.16" stroke-width="1"/>
<text x="36.00" y="116.60" font-size="12" fill="#d8d9da" text-anchor="end" textLength="26.73" lengthAdjust="spacingAndGlyphs">0.075</text>
<line x1="42" y1="145.5" x2="548" y2="145.5" stroke="#c8c8c8" stroke-opacity="0.16" stroke-width="1"/>
<text x="36.00" y="150.20" font-size="12" fill="#d8d9da" text-anchor="end" textLength="26.73" lengthAdjust="spacingAndGlyphs">0.050</text>
<line x1="42" y1="179.5" x2="548" y2="179.5" stroke="#c8c8c8" stroke-opacity="0.16" stroke-width="1"/>
<text x="36.00" y="183.80" font-size="12" fill="#d8d9da" text-anchor="end" textLength="26.73" lengthAdjust="spacingAndGlyphs">0.025</text>
<line x1="42" y1="213.5" x2="548" y2="213.5" stroke="#c8c8c8" stroke-opacity="0.16" stroke-width="1"/>
<text x="36.00" y="217.40" font-size="12" fill="#d8d9da" text-anchor="end" textLength="5.94" lengthAdjust="spacingAndGlyphs">0</text>
<line x1="113.5" y1="45.0" x2="113.5" y2="214.0" stroke="#c8c8c8" stroke-opacity="0.22" stroke-width="1"/>
<text x="113.13" y="230.50" font-size="12" fill="#d8d9da" text-anchor="middle" textLength="41.57" lengthAdjust="spacingAndGlyphs">14:17:30</text>
<line x1="196.5" y1="45.0" x2="196.5" y2="214.0" stroke="#c8c8c8" stroke-opacity="0.22" stroke-width="1"/>
<text x="196.50" y="230.50" font-size="12" fill="#d8d9da" text-anchor="middle" textLength="41.57" lengthAdjust="spacingAndGlyphs">14:18:00</text>
<line x1="279.5" y1="45.0" x2="279.5" y2="214.0" stroke="#c8c8c8" stroke-opacity="0.22" stroke-width="1"/>
<text x="279.86" y="230.50" font-size="12" fill="#d8d9da" text-anchor="middle" textLength="41.57" lengthAdjust="spacingAndGlyphs">14:18:30</text>
<line x1="363.5" y1="45.0" x2="363.5" y2="214.0" stroke="#c8c8c8" stroke-opacity="0.22" stroke-width="1"/>
<text x="363.22" y="230.50" font-size="12" fill="#d8d9da" text-anchor="middle" textLength="41.57" lengthAdjust="spacingAndGlyphs">14:19:00</text>
<line x1="446.5" y1="45.0" x2="446.5" y2="214.0" stroke="#c8c8c8" stroke-opacity="0.22" stroke-width="1"/>
<text x="446.58" y="230.50" font-size="12" fill="#d8d9da" text-anchor="middle" textLength="41.57" lengthAdjust="spacingAndGlyphs">14:19:30</text>
<line x1="529.5" y1="45.0" x2="529.5" y2="214.0" stroke="#c8c8c8" stroke-opacity="0.22" stroke-width="1"/>
<text x="529.94" y="230.50" font-size="12" fill="#d8d9da" text-anchor="middle" textLength="41.57" lengthAdjust="spacingAndGlyphs">14:20:00</text>
<polygon points="57.56,213.50 85.35,213.50 113.13,213.50 140.92,213.50 168.71,213.50 196.50,213.50 224.28,213.50 252.07,213.50 279.86,213.50 307.64,213.50 335.43,213.50 363.22,213.50 391.00,213.50 418.79,213.50 446.58,213.50 474.36,213.50 502.15,213.50 529.94,213.50 529.94,213.50 502.15,213.50 474.36,213.50 446.58,213.50 418.79,213.50 391.00,213.50 363.22,213.50 335.43,213.50 307.64,213.50 279.86,213.50 252.07,213.50 224.28,213.50 196.50,213.50 168.71,213.50 140.92,213.50 113.13,213.50 85.35,213.50 57.56,213.50" fill="#7EB26D" fill-opacity="0.1"/>
<polygon points="57.56,213.50 85.35,213.50 113.13,213.50 140.92,213.50 168.71,213.50 196.50,213.50 224.28,213.50 252.07,213.50 279.86,213.50 307.64,213.50 335.43,213.50 363.22,213.50 391.00,213.50 418.79,213.50 446.58,79.10 474.36,213.50 502.15,213.50 529.94,213.50 529.94,213.50 502.15,213.50 474.36,213.50 446.58,213.50 418.79,213.50 391.00,213.50 363.22,213.50 335.43,213.50 307.64,213.50 279.86,213.50 252.07,213.50 224.28,213.50 196.50,213.50 168.71,213.50 140.92,213.50 113.13,213.50 85.35,213.50 57.56,213.50" fill="#EAB839" fill-opacity="0.1"/>
<polyline points="57.56,213.50 85.35,213.50 113.13,213.50 140.92,213.50 168.71,213.50 196.50,213.50 224.28,213.50 252.07,213.50 279.86,213.50 307.64,213.50 335.43,213.50 363.22,213.50 391.00,213.50 418.79,213.50 446.58,213.50 474.36,213.50 502.15,213.50 529.94,213.50" fill="none" stroke="#7EB26D" stroke-width="1" stroke-linejoin="round"/>
<polyline points="57.56,213.50 85.35,213.50 113.13,213.50 140.92,213.50 168.71,213.50 196.50,213.50 224.28,213.50 252.07,213.50 279.86,213.50 307.64,213.50 335.43,213.50 363.22,213.50 391.00,213.50 418.79,213.50 446.58,79.10 474.36,213.50 502.15,213.50 529.94,213.50" fill="none" stroke="#EAB839" stroke-width="1" stroke-linejoin="round"/>
<rect x="18" y="249.8" width="12" height="3.2" rx="1" fill="#7EB26D"/>
<text x="34.00" y="255.30" font-size="12" fill="#d8d9da" text-anchor="start" textLength="72.65" lengthAdjust="spacingAndGlyphs">head container</text>
<text x="113.65" y="255.30" font-size="12" fill="#d8d9da" text-anchor="start" textLength="35.40" lengthAdjust="spacingAndGlyphs">Total: 0</text>
<rect x="158.8492046875" y="249.8" width="12" height="3.2" rx="1" fill="#EAB839"/>
<text x="174.85" y="255.30" font-size="12" fill="#d8d9da" text-anchor="start" textLength="47.61" lengthAdjust="spacingAndGlyphs">get object</text>
<text x="229.46" y="255.30" font-size="12" fill="#d8d9da" text-anchor="start" textLength="62.88" lengthAdjust="spacingAndGlyphs">Total: 0.1000</text>
<path d="M574,261 h2 v5 h-5 v-2 h3 z" fill="#6a6a6c"/>
</svg></div>
<div class="panel" style="left:1191px;top:388px"><svg width="578" height="268" viewBox="0 0 578 268">
<text x="288.7" y="19.1" font-size="13" fill="#d8d9da" stroke="#d8d9da" stroke-width="0.35" text-anchor="middle" textLength="71.2" lengthAdjust="spacingAndGlyphs">Per Disk BW</text>
<line x1="60" y1="45.5" x2="548" y2="45.5" stroke="#c8c8c8" stroke-opacity="0.16" stroke-width="1"/>
<text x="54.00" y="49.40" font-size="12" fill="#d8d9da" text-anchor="end" textLength="45.11" lengthAdjust="spacingAndGlyphs">10.0 MBs</text>
<line x1="60" y1="87.5" x2="548" y2="87.5" stroke="#c8c8c8" stroke-opacity="0.16" stroke-width="1"/>
<text x="54.00" y="91.40" font-size="12" fill="#d8d9da" text-anchor="end" textLength="39.17" lengthAdjust="spacingAndGlyphs">7.5 MBs</text>
<line x1="60" y1="129.5" x2="548" y2="129.5" stroke="#c8c8c8" stroke-opacity="0.16" stroke-width="1"/>
<text x="54.00" y="133.40" font-size="12" fill="#d8d9da" text-anchor="end" textLength="39.17" lengthAdjust="spacingAndGlyphs">5.0 MBs</text>
<line x1="60" y1="171.5" x2="548" y2="171.5" stroke="#c8c8c8" stroke-opacity="0.16" stroke-width="1"/>
<text x="54.00" y="175.40" font-size="12" fill="#d8d9da" text-anchor="end" textLength="39.17" lengthAdjust="spacingAndGlyphs">2.5 MBs</text>
<line x1="60" y1="213.5" x2="548" y2="213.5" stroke="#c8c8c8" stroke-opacity="0.16" stroke-width="1"/>
<text x="54.00" y="217.40" font-size="12" fill="#d8d9da" text-anchor="end" textLength="26.71" lengthAdjust="spacingAndGlyphs">0 kBs</text>
<line x1="128.5" y1="45.0" x2="128.5" y2="214.0" stroke="#c8c8c8" stroke-opacity="0.22" stroke-width="1"/>
<text x="128.60" y="230.50" font-size="12" fill="#d8d9da" text-anchor="middle" textLength="41.57" lengthAdjust="spacingAndGlyphs">14:17:30</text>
<line x1="208.5" y1="45.0" x2="208.5" y2="214.0" stroke="#c8c8c8" stroke-opacity="0.22" stroke-width="1"/>
<text x="209.00" y="230.50" font-size="12" fill="#d8d9da" text-anchor="middle" textLength="41.57" lengthAdjust="spacingAndGlyphs">14:18:00</text>
<line x1="289.5" y1="45.0" x2="289.5" y2="214.0" stroke="#c8c8c8" stroke-opacity="0.22" stroke-width="1"/>
<text x="289.39" y="230.50" font-size="12" fill="#d8d9da" text-anchor="middle" textLength="41.57" lengthAdjust="spacingAndGlyphs">14:18:30</text>
<line x1="369.5" y1="45.0" x2="369.5" y2="214.0" stroke="#c8c8c8" stroke-opacity="0.22" stroke-width="1"/>
<text x="369.79" y="230.50" font-size="12" fill="#d8d9da" text-anchor="middle" textLength="41.57" lengthAdjust="spacingAndGlyphs">14:19:00</text>
<line x1="450.5" y1="45.0" x2="450.5" y2="214.0" stroke="#c8c8c8" stroke-opacity="0.22" stroke-width="1"/>
<text x="450.19" y="230.50" font-size="12" fill="#d8d9da" text-anchor="middle" textLength="41.57" lengthAdjust="spacingAndGlyphs">14:19:30</text>
<line x1="530.5" y1="45.0" x2="530.5" y2="214.0" stroke="#c8c8c8" stroke-opacity="0.22" stroke-width="1"/>
<text x="530.58" y="230.50" font-size="12" fill="#d8d9da" text-anchor="middle" textLength="41.57" lengthAdjust="spacingAndGlyphs">14:20:00</text>
<polygon points="75.01,48.90 101.81,48.90 128.60,48.90 155.40,48.90 182.20,162.90 209.00,213.40 235.80,213.40 262.60,213.40 289.39,211.40 316.19,48.30 342.99,49.40 369.79,49.40 396.59,48.90 423.39,124.10 450.19,187.10 476.98,213.40 503.78,213.40 530.58,213.40 530.58,213.50 503.78,213.50 476.98,213.50 450.19,213.50 423.39,213.50 396.59,213.50 369.79,213.50 342.99,213.50 316.19,213.50 289.39,213.50 262.60,213.50 235.80,213.50 209.00,213.50 182.20,213.50 155.40,213.50 128.60,213.50 101.81,213.50 75.01,213.50" fill="#EAB839" fill-opacity="0.1"/>
<polyline points="75.01,48.90 101.81,48.90 128.60,48.90 155.40,48.90 182.20,162.90 209.00,213.40 235.80,213.40 262.60,213.40 289.39,211.40 316.19,48.30 342.99,49.40 369.79,49.40 396.59,48.90 423.39,124.10 450.19,187.10 476.98,213.40 503.78,213.40 530.58,213.40" fill="none" stroke="#EAB839" stroke-width="1" stroke-linejoin="round"/>
<rect x="18" y="249.8" width="12" height="3.2" rx="1" fill="#7EB26D"/>
<text x="34.00" y="255.30" font-size="12" fill="#8a8a8c" text-anchor="start" textLength="29.29" lengthAdjust="spacingAndGlyphs">sdb-w</text>
<rect x="73.09000781249999" y="249.8" width="12" height="3.2" rx="1" fill="#EAB839"/>
<text x="89.09" y="255.30" font-size="12" fill="#d8d9da" text-anchor="start" textLength="25.02" lengthAdjust="spacingAndGlyphs">sdb-r</text>
<path d="M574,261 h2 v5 h-5 v-2 h3 z" fill="#6a6a6c"/>
</svg></div>
<div class="panel" style="left:10px;top:668px"><svg width="578" height="268" viewBox="0 0 578 268">
<text x="288.7" y="19.1" font-size="13" fill="#d8d9da" stroke="#d8d9da" stroke-width="0.35" text-anchor="middle" textLength="114.3" lengthAdjust="spacingAndGlyphs">Network Bandwidth</text>
<line x1="57" y1="45.5" x2="548" y2="45.5" stroke="#c8c8c8" stroke-opacity="0.16" stroke-width="1"/>
<text x="51.00" y="49.40" font-size="12" fill="#d8d9da" text-anchor="end" textLength="40.96" lengthAdjust="spacingAndGlyphs">15 Mbps</text>
<line x1="57" y1="101.5" x2="548" y2="101.5" stroke="#c8c8c8" stroke-opacity="0.16" stroke-width="1"/>
<text x="51.00" y="105.40" font-size="12" fill="#d8d9da" text-anchor="end" textLength="40.96" lengthAdjust="spacingAndGlyphs">10 Mbps</text>
<line x1="57" y1="157.5" x2="548" y2="157.5" stroke="#c8c8c8" stroke-opacity="0.16" stroke-width="1"/>
<text x="51.00" y="161.40" font-size="12" fill="#d8d9da" text-anchor="end" textLength="35.02" lengthAdjust="spacingAndGlyphs">5 Mbps</text>
<line x1="57" y1="213.5" x2="548" y2="213.5" stroke="#c8c8c8" stroke-opacity="0.16" stroke-width="1"/>
<text x="51.00" y="217.40" font-size="12" fill="#d8d9da" text-anchor="end" textLength="31.47" lengthAdjust="spacingAndGlyphs">0 kbps</text>
<line x1="126.5" y1="45.0" x2="126.5" y2="214.0" stroke="#c8c8c8" stroke-opacity="0.22" stroke-width="1"/>
<text x="126.03" y="230.50" font-size="12" fill="#d8d9da" text-anchor="middle" textLength="41.57" lengthAdjust="spacingAndGlyphs">14:17:30</text>
<line x1="206.5" y1="45.0" x2="206.5" y2="214.0" stroke="#c8c8c8" stroke-opacity="0.22" stroke-width="1"/>
<text x="206.92" y="230.50" font-size="12" fill="#d8d9da" text-anchor="middle" textLength="41.57" lengthAdjust="spacingAndGlyphs">14:18:00</text>
<line x1="287.5" y1="45.0" x2="287.5" y2="214.0" stroke="#c8c8c8" stroke-opacity="0.22" stroke-width="1"/>
<text x="287.81" y="230.50" font-size="12" fill="#d8d9da" text-anchor="middle" textLength="41.57" lengthAdjust="spacingAndGlyphs">14:18:30</text>
<line x1="368.5" y1="45.0" x2="368.5" y2="214.0" stroke="#c8c8c8" stroke-opacity="0.22" stroke-width="1"/>
<text x="368.69" y="230.50" font-size="12" fill="#d8d9da" text-anchor="middle" textLength="41.57" lengthAdjust="spacingAndGlyphs">14:19:00</text>
<line x1="449.5" y1="45.0" x2="449.5" y2="214.0" stroke="#c8c8c8" stroke-opacity="0.22" stroke-width="1"/>
<text x="449.58" y="230.50" font-size="12" fill="#d8d9da" text-anchor="middle" textLength="41.57" lengthAdjust="spacingAndGlyphs">14:19:30</text>
<line x1="530.5" y1="45.0" x2="530.5" y2="214.0" stroke="#c8c8c8" stroke-opacity="0.22" stroke-width="1"/>
<text x="530.47" y="230.50" font-size="12" fill="#d8d9da" text-anchor="middle" textLength="41.57" lengthAdjust="spacingAndGlyphs">14:20:00</text>
<polygon points="72.10,213.00 99.06,213.00 126.03,213.00 152.99,213.00 179.95,213.00 206.92,59.10 233.88,213.00 260.84,213.00 287.81,213.00 314.77,213.00 341.73,213.00 368.69,213.00 395.66,213.00 422.62,213.00 449.58,213.00 476.55,213.00 503.51,213.00 530.47,213.00 530.47,213.50 503.51,213.50 476.55,213.50 449.58,213.50 422.62,213.50 395.66,213.50 368.69,213.50 341.73,213.50 314.77,213.50 287.81,213.50 260.84,213.50 233.88,213.50 206.92,213.50 179.95,213.50 152.99,213.50 126.03,213.50 99.06,213.50 72.10,213.50" fill="#7EB26D" fill-opacity="0.1"/>
<polygon points="72.10,211.60 99.06,211.60 126.03,211.30 152.99,211.60 179.95,211.60 206.92,59.10 233.88,211.60 260.84,211.30 287.81,211.30 314.77,211.60 341.73,211.60 368.69,211.60 395.66,211.60 422.62,211.60 449.58,64.90 476.55,211.60 503.51,211.60 530.47,211.60 530.47,213.00 503.51,213.00 476.55,213.00 449.58,213.00 422.62,213.00 395.66,213.00 368.69,213.00 341.73,213.00 314.77,213.00 287.81,213.00 260.84,213.00 233.88,213.00 206.92,59.10 179.95,213.00 152.99,213.00 126.03,213.00 99.06,213.00 72.10,213.00" fill="#EAB839" fill-opacity="0.1"/>
<polyline points="72.10,213.00 99.06,213.00 126.03,213.00 152.99,213.00 179.95,213.00 206.92,59.10 233.88,213.00 260.84,213.00 287.81,213.00 314.77,213.00 341.73,213.00 368.69,213.00 395.66,213.00 422.62,213.00 449.58,213.00 476.55,213.00 503.51,213.00 530.47,213.00" fill="none" stroke="#7EB26D" stroke-width="1" stroke-linejoin="round"/>
<polyline points="72.10,211.60 99.06,211.60 126.03,211.30 152.99,211.60 179.95,211.60 206.92,59.10 233.88,211.60 260.84,211.30 287.81,211.30 314.77,211.60 341.73,211.60 368.69,211.60 395.66,211.60 422.62,211.60 449.58,64.90 476.55,211.60 503.51,211.60 530.47,211.60" fill="none" stroke="#EAB839" stroke-width="1" stroke-linejoin="round"/>
<rect x="18" y="249.8" width="12" height="3.2" rx="1" fill="#7EB26D"/>
<text x="34.00" y="255.30" font-size="12" fill="#d8d9da" text-anchor="start" textLength="41.50" lengthAdjust="spacingAndGlyphs">recieved</text>
<rect x="85.3035421875" y="249.8" width="12" height="3.2" rx="1" fill="#EAB839"/>
<text x="101.30" y="255.30" font-size="12" fill="#d8d9da" text-anchor="start" textLength="20.75" lengthAdjust="spacingAndGlyphs">sent</text>
<path d="M574,261 h2 v5 h-5 v-2 h3 z" fill="#6a6a6c"/>
</svg></div>
<div class="panel" style="left:600px;top:668px"><svg width="578" height="268" viewBox="0 0 578 268">
<text x="288.7" y="19.1" font-size="13" fill="#d8d9da" stroke="#d8d9da" stroke-width="0.35" text-anchor="middle" textLength="148.4" lengthAdjust="spacingAndGlyphs">DELETE Container/Object</text>
<line x1="36" y1="45.5" x2="548" y2="45.5" stroke="#c8c8c8" stroke-opacity="0.16" stroke-width="1"/>
<text x="30.00" y="49.40" font-size="12" fill="#d8d9da" text-anchor="end" textLength="20.79" lengthAdjust="spacingAndGlyphs">0.25</text>
<line x1="36" y1="78.5" x2="548" y2="78.5" stroke="#c8c8c8" stroke-opacity="0.16" stroke-width="1"/>
<text x="30.00" y="83.00" font-size="12" fill="#d8d9da" text-anchor="end" textLength="20.79" lengthAdjust="spacingAndGlyphs">0.20</text>
<line x1="36" y1="112.5" x2="548" y2="112.5" stroke="#c8c8c8" stroke-opacity="0.16" stroke-width="1"/>
<text x="30.00" y="116.60" font-size="12" fill="#d8d9da" text-anchor="end" textLength="20.79" lengthAdjust="spacingAndGlyphs">0.15</text>
<line x1="36" y1="145.5" x2="548" y2="145.5" stroke="#c8c8c8" stroke-opacity="0.16" stroke-width="1"/>
<text x="30.00" y="150.20" font-size="12" fill="#d8d9da" text-anchor="end" textLength="20.79" lengthAdjust="spacingAndGlyphs">0.10</text>
<line x1="36" y1="179.5" x2="548" y2="179.5" stroke="#c8c8c8" stroke-opacity="0.16" stroke-width="1"/>
<text x="30.00" y="183.80" font-size="12" fill="#d8d9da" text-anchor="end" textLength="20.79" lengthAdjust="spacingAndGlyphs">0.05</text>
<line x1="36" y1="213.5" x2="548" y2="213.5" stroke="#c8c8c8" stroke-opacity="0.16" stroke-width="1"/>
<text x="30.00" y="217.40" font-size="12" fill="#d8d9da" text-anchor="end" textLength="5.94" lengthAdjust="spacingAndGlyphs">0</text>
<line x1="107.5" y1="45.0" x2="107.5" y2="214.0" stroke="#c8c8c8" stroke-opacity="0.22" stroke-width="1"/>
<text x="107.98" y="230.50" font-size="12" fill="#d8d9da" text-anchor="middle" textLength="41.57" lengthAdjust="spacingAndGlyphs">14:17:30</text>
<line x1="192.5" y1="45.0" x2="192.5" y2="214.0" stroke="#c8c8c8" stroke-opacity="0.22" stroke-width="1"/>
<text x="192.33" y="230.50" font-size="12" fill="#d8d9da" text-anchor="middle" textLength="41.57" lengthAdjust="spacingAndGlyphs">14:18:00</text>
<line x1="276.5" y1="45.0" x2="276.5" y2="214.0" stroke="#c8c8c8" stroke-opacity="0.22" stroke-width="1"/>
<text x="276.68" y="230.50" font-size="12" fill="#d8d9da" text-anchor="middle" textLength="41.57" lengthAdjust="spacingAndGlyphs">14:18:30</text>
<line x1="361.5" y1="45.0" x2="361.5" y2="214.0" stroke="#c8c8c8" stroke-opacity="0.22" stroke-width="1"/>
<text x="361.03" y="230.50" font-size="12" fill="#d8d9da" text-anchor="middle" textLength="41.57" lengthAdjust="spacingAndGlyphs">14:19:00</text>
<line x1="445.5" y1="45.0" x2="445.5" y2="214.0" stroke="#c8c8c8" stroke-opacity="0.22" stroke-width="1"/>
<text x="445.38" y="230.50" font-size="12" fill="#d8d9da" text-anchor="middle" textLength="41.57" lengthAdjust="spacingAndGlyphs">14:19:30</text>
<line x1="529.5" y1="45.0" x2="529.5" y2="214.0" stroke="#c8c8c8" stroke-opacity="0.22" stroke-width="1"/>
<text x="529.72" y="230.50" font-size="12" fill="#d8d9da" text-anchor="middle" textLength="41.57" lengthAdjust="spacingAndGlyphs">14:20:00</text>
<polygon points="51.75,213.50 79.86,146.30 107.98,213.50 136.09,213.50 164.21,213.50 192.33,213.50 220.44,213.50 248.56,213.50 276.68,213.50 304.79,213.50 332.91,213.50 361.03,213.50 389.14,213.50 417.26,213.50 445.38,213.50 473.49,213.50 501.61,213.50 529.72,213.50 529.72,213.50 501.61,213.50 473.49,213.50 445.38,213.50 417.26,213.50 389.14,213.50 361.03,213.50 332.91,213.50 304.79,213.50 276.68,213.50 248.56,213.50 220.44,213.50 192.33,213.50 164.21,213.50 136.09,213.50 107.98,213.50 79.86,213.50 51.75,213.50" fill="#7EB26D" fill-opacity="0.1"/>
<polygon points="51.75,213.50 79.86,79.10 107.98,213.50 136.09,213.50 164.21,213.50 192.33,213.50 220.44,213.50 248.56,213.50 276.68,213.50 304.79,213.50 332.91,213.50 361.03,213.50 389.14,213.50 417.26,213.50 445.38,213.50 473.49,213.50 501.61,213.50 529.72,213.50 529.72,213.50 501.61,213.50 473.49,213.50 445.38,213.50 417.26,213.50 389.14,213.50 361.03,213.50 332.91,213.50 304.79,213.50 276.68,213.50 248.56,213.50 220.44,213.50 192.33,213.50 164.21,213.50 136.09,213.50 107.98,213.50 79.86,213.50 51.75,213.50" fill="#EAB839" fill-opacity="0.1"/>
<polygon points="51.75,213.50 79.86,79.10 107.98,213.50 136.09,213.50 164.21,213.50 192.33,213.50 220.44,213.50 248.56,213.50 276.68,213.50 304.79,213.50 332.91,213.50 361.03,213.50 389.14,213.50 417.26,213.50 445.38,213.50 473.49,213.50 501.61,213.50 529.72,213.50 529.72,213.50 501.61,213.50 473.49,213.50 445.38,213.50 417.26,213.50 389.14,213.50 361.03,213.50 332.91,213.50 304.79,213.50 276.68,213.50 248.56,213.50 220.44,213.50 192.33,213.50 164.21,213.50 136.09,213.50 107.98,213.50 79.86,213.50 51.75,213.50" fill="#6ED0E0" fill-opacity="0.1"/>
<polyline points="51.75,213.50 79.86,146.30 107.98,213.50 136.09,213.50 164.21,213.50 192.33,213.50 220.44,213.50 248.56,213.50 276.68,213.50 304.79,213.50 332.91,213.50 361.03,213.50 389.14,213.50 417.26,213.50 445.38,213.50 473.49,213.50 501.61,213.50 529.72,213.50" fill="none" stroke="#7EB26D" stroke-width="1" stroke-linejoin="round"/>
<polyline points="51.75,213.50 79.86,79.10 107.98,213.50 136.09,213.50 164.21,213.50 192.33,213.50 220.44,213.50 248.56,213.50 276.68,213.50 304.79,213.50 332.91,213.50 361.03,213.50 389.14,213.50 417.26,213.50 445.38,213.50 473.49,213.50 501.61,213.50 529.72,213.50" fill="none" stroke="#EAB839" stroke-width="1" stroke-linejoin="round"/>
<polyline points="51.75,213.50 79.86,79.10 107.98,213.50 136.09,213.50 164.21,213.50 192.33,213.50 220.44,213.50 248.56,213.50 276.68,213.50 304.79,213.50 332.91,213.50 361.03,213.50 389.14,213.50 417.26,213.50 445.38,213.50 473.49,213.50 501.61,213.50 529.72,213.50" fill="none" stroke="#6ED0E0" stroke-width="1" stroke-linejoin="round"/>
<rect x="18" y="249.8" width="12" height="3.2" rx="1" fill="#7EB26D"/>
<text x="34.00" y="255.30" font-size="12" fill="#d8d9da" text-anchor="start" textLength="67.76" lengthAdjust="spacingAndGlyphs">delete objects</text>
<text x="108.76" y="255.30" font-size="12" fill="#d8d9da" text-anchor="start" textLength="62.88" lengthAdjust="spacingAndGlyphs">Total: 0.1000</text>
<rect x="181.43626562500003" y="249.8" width="12" height="3.2" rx="1" fill="#EAB839"/>
<text x="197.44" y="255.30" font-size="12" fill="#d8d9da" text-anchor="start" textLength="83.63" lengthAdjust="spacingAndGlyphs">delete containers</text>
<text x="288.06" y="255.30" font-size="12" fill="#d8d9da" text-anchor="start" textLength="62.88" lengthAdjust="spacingAndGlyphs">Total: 0.2000</text>
<rect x="360.7429203125001" y="249.8" width="12" height="3.2" rx="1" fill="#6ED0E0"/>
<text x="376.74" y="255.30" font-size="12" fill="#d8d9da" text-anchor="start" textLength="83.63" lengthAdjust="spacingAndGlyphs">delete containers</text>
<text x="467.37" y="255.30" font-size="12" fill="#d8d9da" text-anchor="start" textLength="62.88" lengthAdjust="spacingAndGlyphs">Total: 0.2000</text>
<path d="M574,261 h2 v5 h-5 v-2 h3 z" fill="#6a6a6c"/>
</svg></div>
<div class="panel" style="left:1191px;top:668px"><svg width="578" height="268" viewBox="0 0 578 268">
<text x="288.7" y="19.1" font-size="13" fill="#d8d9da" stroke="#d8d9da" stroke-width="0.35" text-anchor="middle" textLength="119.1" lengthAdjust="spacingAndGlyphs">Per Disk Throughput</text>
<line x1="41" y1="45.5" x2="548" y2="45.5" stroke="#c8c8c8" stroke-opacity="0.16" stroke-width="1"/>
<text x="35.00" y="49.40" font-size="12" fill="#d8d9da" text-anchor="end" textLength="5.94" lengthAdjust="spacingAndGlyphs">8</text>
<line x1="41" y1="87.5" x2="548" y2="87.5" stroke="#c8c8c8" stroke-opacity="0.16" stroke-width="1"/>
<text x="35.00" y="91.40" font-size="12" fill="#d8d9da" text-anchor="end" textLength="5.94" lengthAdjust="spacingAndGlyphs">6</text>
<line x1="41" y1="129.5" x2="548" y2="129.5" stroke="#c8c8c8" stroke-opacity="0.16" stroke-width="1"/>
<text x="35.00" y="133.40" font-size="12" fill="#d8d9da" text-anchor="end" textLength="5.94" lengthAdjust="spacingAndGlyphs">4</text>
<line x1="41" y1="171.5" x2="548" y2="171.5" stroke="#c8c8c8" stroke-opacity="0.16" stroke-width="1"/>
<text x="35.00" y="175.40" font-size="12" fill="#d8d9da" text-anchor="end" textLength="5.94" lengthAdjust="spacingAndGlyphs">2</text>
<line x1="41" y1="213.5" x2="548" y2="213.5" stroke="#c8c8c8" stroke-opacity="0.16" stroke-width="1"/>
<text x="35.00" y="217.40" font-size="12" fill="#d8d9da" text-anchor="end" textLength="5.94" lengthAdjust="spacingAndGlyphs">0</text>
<line x1="112.5" y1="45.0" x2="112.5" y2="214.0" stroke="#c8c8c8" stroke-opacity="0.22" stroke-width="1"/>
<text x="112.28" y="230.50" font-size="12" fill="#d8d9da" text-anchor="middle" textLength="41.57" lengthAdjust="spacingAndGlyphs">14:17:30</text>
<line x1="195.5" y1="45.0" x2="195.5" y2="214.0" stroke="#c8c8c8" stroke-opacity="0.22" stroke-width="1"/>
<text x="195.80" y="230.50" font-size="12" fill="#d8d9da" text-anchor="middle" textLength="41.57" lengthAdjust="spacingAndGlyphs">14:18:00</text>
<line x1="279.5" y1="45.0" x2="279.5" y2="214.0" stroke="#c8c8c8" stroke-opacity="0.22" stroke-width="1"/>
<text x="279.33" y="230.50" font-size="12" fill="#d8d9da" text-anchor="middle" textLength="41.57" lengthAdjust="spacingAndGlyphs">14:18:30</text>
<line x1="362.5" y1="45.0" x2="362.5" y2="214.0" stroke="#c8c8c8" stroke-opacity="0.22" stroke-width="1"/>
<text x="362.85" y="230.50" font-size="12" fill="#d8d9da" text-anchor="middle" textLength="41.57" lengthAdjust="spacingAndGlyphs">14:19:00</text>
<line x1="446.5" y1="45.0" x2="446.5" y2="214.0" stroke="#c8c8c8" stroke-opacity="0.22" stroke-width="1"/>
<text x="446.38" y="230.50" font-size="12" fill="#d8d9da" text-anchor="middle" textLength="41.57" lengthAdjust="spacingAndGlyphs">14:19:30</text>
<line x1="529.5" y1="45.0" x2="529.5" y2="214.0" stroke="#c8c8c8" stroke-opacity="0.22" stroke-width="1"/>
<text x="529.90" y="230.50" font-size="12" fill="#d8d9da" text-anchor="middle" textLength="41.57" lengthAdjust="spacingAndGlyphs">14:20:00</text>
<polygon points="56.59,196.80 84.43,184.10 112.28,127.20 140.12,180.20 167.96,182.00 195.80,77.70 223.64,161.60 251.48,171.30 279.33,155.50 307.17,188.70 335.01,192.50 362.85,170.50 390.69,180.20 418.54,184.10 446.38,179.00 474.22,186.10 502.06,192.50 529.90,174.60 529.90,213.50 502.06,213.50 474.22,213.50 446.38,213.50 418.54,213.50 390.69,213.50 362.85,213.50 335.01,213.50 307.17,213.50 279.33,213.50 251.48,213.50 223.64,213.50 195.80,213.50 167.96,213.50 140.12,213.50 112.28,213.50 84.43,213.50 56.59,213.50" fill="#7EB26D" fill-opacity="0.1"/>
<polyline points="56.59,196.80 84.43,184.10 112.28,127.20 140.12,180.20 167.96,182.00 195.80,77.70 223.64,161.60 251.48,171.30 279.33,155.50 307.17,188.70 335.01,192.50 362.85,170.50 390.69,180.20 418.54,184.10 446.38,179.00 474.22,186.10 502.06,192.50 529.90,174.60" fill="none" stroke="#7EB26D" stroke-width="1" stroke-linejoin="round"/>
<rect x="18" y="249.8" width="12" height="3.2" rx="1" fill="#7EB26D"/>
<text x="34.00" y="255.30" font-size="12" fill="#d8d9da" text-anchor="start" textLength="29.29" lengthAdjust="spacingAndGlyphs">sdb-w</text>
<rect x="73.09000781249999" y="249.8" width="12" height="3.2" rx="1" fill="#EAB839"/>
<text x="89.09" y="255.30" font-size="12" fill="#8a8a8c" text-anchor="start" textLength="25.02" lengthAdjust="spacingAndGlyphs">sdb-r</text>
<g transform="translate(19.8,134.8) rotate(-90)"><text x="0" y="0" font-size="12" fill="#d8d9da" text-anchor="middle" textLength="30.6" lengthAdjust="spacingAndGlyphs">ops/s</text></g>
<path d="M574,261 h2 v5 h-5 v-2 h3 z" fill="#6a6a6c"/>
</svg></div>
</body></html>
